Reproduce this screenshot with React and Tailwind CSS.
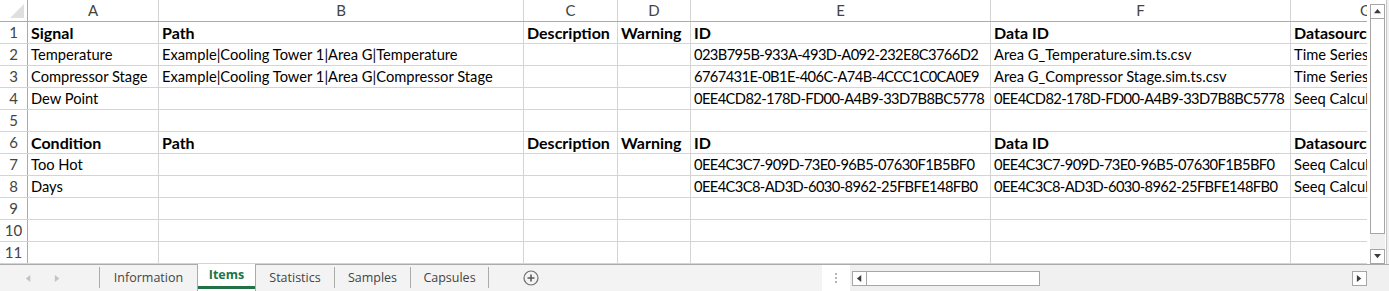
const COLS = [
  "w-[131px]",
  "w-[365px]",
  "w-[94px]",
  "w-[73px]",
  "w-[300px]",
  "w-[300px]",
  "w-[150px]",
];
const LETTERS = ["A", "B", "C", "D", "E", "F", "G"];

const ROWS = [
  { bold: true, cells: ["Signal", "Path", "Description", "Warning", "ID", "Data ID", "Datasource"] },
  {
    cells: [
      "Temperature",
      "Example|Cooling Tower 1|Area G|Temperature",
      "",
      "",
      "023B795B-933A-493D-A092-232E8C3766D2",
      "Area G_Temperature.sim.ts.csv",
      "Time Series CSV Files",
    ],
  },
  {
    cells: [
      "Compressor Stage",
      "Example|Cooling Tower 1|Area G|Compressor Stage",
      "",
      "",
      "6767431E-0B1E-406C-A74B-4CCC1C0CA0E9",
      "Area G_Compressor Stage.sim.ts.csv",
      "Time Series CSV Files",
    ],
  },
  {
    cells: [
      "Dew Point",
      "",
      "",
      "",
      "0EE4CD82-178D-FD00-A4B9-33D7B8BC5778",
      "0EE4CD82-178D-FD00-A4B9-33D7B8BC5778",
      "Seeq Calculations",
    ],
  },
  { cells: ["", "", "", "", "", "", ""] },
  { bold: true, cells: ["Condition", "Path", "Description", "Warning", "ID", "Data ID", "Datasource"] },
  {
    cells: [
      "Too Hot",
      "",
      "",
      "",
      "0EE4C3C7-909D-73E0-96B5-07630F1B5BF0",
      "0EE4C3C7-909D-73E0-96B5-07630F1B5BF0",
      "Seeq Calculations",
    ],
  },
  {
    cells: [
      "Days",
      "",
      "",
      "",
      "0EE4C3C8-AD3D-6030-8962-25FBFE148FB0",
      "0EE4C3C8-AD3D-6030-8962-25FBFE148FB0",
      "Seeq Calculations",
    ],
  },
  { cells: ["", "", "", "", "", "", ""] },
  { cells: ["", "", "", "", "", "", ""] },
  { cells: ["", "", "", "", "", "", ""] },
];

const TABS = [
  { name: "Information", w: "w-[97px]" },
  { name: "Items", w: "w-[59px]", active: true },
  { name: "Statistics", w: "w-[78px]" },
  { name: "Samples", w: "w-[75px]" },
  { name: "Capsules", w: "w-[77px]" },
];

// guid-like values are set a touch tighter so they fit their columns
const isGuid = (s) => /^[0-9A-F]{8}-[0-9A-F]{4}-/.test(s);

function Tri({ dir, color = "#3c3c3c", size = 7 }) {
  const pts = {
    up: "0,6 4,1 8,6",
    down: "0,1 4,6 8,1",
    left: "6,0 1,4 6,8",
    right: "1,0 6,4 1,8",
  }[dir];
  return (
    <svg width={size} height={size} viewBox="0 0 8 8">
      <polygon points={pts} fill={color} />
    </svg>
  );
}

function Grid() {
  return (
    <div className="w-[1367px] h-[264px] overflow-hidden bg-white">
      {/* column headers */}
      <div className="flex h-[22px] border-b border-[#ababab]">
        <div className="w-[28px] shrink-0 border-r border-[#ababab] relative">
          <div className="absolute right-[3px] bottom-[3px] w-0 h-0 border-l-[14px] border-l-transparent border-b-[14px] border-b-[#dfdfdf]" />
        </div>
        {LETTERS.map((l, i) => (
          <div
            key={l}
            className={`${COLS[i]} shrink-0 border-r border-[#d4d4d4] flex items-center justify-center text-[#444] text-[15px]`}
          >
            {l}
          </div>
        ))}
      </div>

      {ROWS.map((r, ri) => (
        <div key={ri} className="flex h-[22px] border-b border-[#d4d4d4]">
          <div className="w-[28px] shrink-0 border-r border-[#ababab] flex items-center justify-center text-[#444] text-[15px]">
            {ri + 1}
          </div>
          {r.cells.map((c, ci) => (
            <div
              key={ci}
              className={`${COLS[ci]} shrink-0 border-r border-[#d4d4d4] pl-[3px] flex items-center whitespace-nowrap overflow-hidden text-black ${
                r.bold ? "font-bold text-[16px]" : "text-[14.7px]"
              } ${isGuid(c) ? "tracking-[-0.6px]" : ""}`}
            >
              {c}
            </div>
          ))}
        </div>
      ))}
    </div>
  );
}

function VScroll() {
  return (
    <div className="w-[22px] h-[264px] flex bg-white">
      <div className="w-[3px]" />
      <div className="w-[15px] flex flex-col bg-[#f0f0f0]">
        <div className="h-[4px] bg-white" />
        <div className="h-[15px] border border-[#a6a6a6] bg-white flex items-center justify-center">
          <Tri dir="up" />
        </div>
        <div className="h-[215px] border-x border-b border-[#a6a6a6] bg-white" />
        <div className="flex-1" />
        <div className="h-[15px] border border-[#a6a6a6] bg-white flex items-center justify-center">
          <Tri dir="down" />
        </div>
      </div>
      <div className="w-[1px]" />
      <div className="w-[1px] bg-[#c6c6c6]" />
      <div className="flex-1 bg-[#f0f0f0]" />
    </div>
  );
}

function TabBar() {
  return (
    <div className="h-[27px] flex bg-[#f3f3f3] border-t border-[#ababab] [font-family:'Open_Sans',sans-serif] text-[12.5px] text-[#444]">
      <div className="w-[99px] flex items-center">
        <div className="ml-[25px]">
          <Tri dir="left" color="#c2c2c2" />
        </div>
        <div className="ml-[22px]">
          <Tri dir="right" color="#c2c2c2" />
        </div>
      </div>
      <div className="w-[1px] h-[21px] mt-[2px] bg-[#ababab]" />
      {TABS.map((t, i) => {
        const nextActive = TABS[i + 1] && TABS[i + 1].active;
        if (t.active) {
          return (
            <div
              key={t.name}
              className={`${t.w} -mt-[1px] bg-white border-x border-[#ababab] flex flex-col items-center`}
            >
              <div className="flex-1 flex items-center font-bold text-[#217346]">{t.name}</div>
              <div className="w-full h-[3px] bg-[#217346] mb-[2px]" />
            </div>
          );
        }
        return (
          <div key={t.name} className="flex">
            <div className={`${t.w} flex items-center justify-center`}>{t.name}</div>
            {!nextActive && <div className="w-[1px] h-[21px] mt-[2px] bg-[#ababab]" />}
          </div>
        );
      })}
      <div className="w-[84px] flex items-center justify-center">
        <svg width="16" height="16" viewBox="0 0 16 16">
          <circle cx="8" cy="8" r="7" fill="none" stroke="#6e6e6e" strokeWidth="1.2" />
          <path d="M8 4.5v7M4.5 8h7" stroke="#5a5a5a" strokeWidth="1.6" />
        </svg>
      </div>
      <div className="w-[249px]" />
      <div className="w-[28px] bg-white flex flex-col items-center justify-center gap-[2px]">
        <div className="w-[2px] h-[2px] bg-[#b5b5b5]" />
        <div className="w-[2px] h-[2px] bg-[#b5b5b5]" />
        <div className="w-[2px] h-[2px] bg-[#b5b5b5]" />
      </div>
      <div className="flex-1 bg-[#f0f0f0] flex items-center pl-[2px]">
        <div className="w-[15px] h-[15px] border border-[#a6a6a6] bg-white flex items-center justify-center">
          <Tri dir="left" />
        </div>
        <div className="w-[173px] h-[15px] border-y border-r border-[#a6a6a6] bg-white" />
        <div className="flex-1" />
        <div className="w-[15px] h-[15px] border border-[#a6a6a6] bg-white flex items-center justify-center mr-[22px]">
          <Tri dir="right" />
        </div>
      </div>
    </div>
  );
}

export default function App() {
  return (
    <div className="w-[1389px] h-[291px] overflow-hidden bg-white [font-family:Lato,sans-serif]">
      <div className="flex">
        <Grid />
        <VScroll />
      </div>
      <TabBar />
    </div>
  );
}
